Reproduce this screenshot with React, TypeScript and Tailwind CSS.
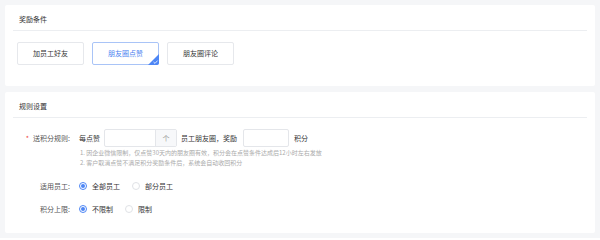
import type { FC, ReactNode } from 'react';

const font = { fontFamily: '"Noto Sans CJK SC", "Noto Sans", sans-serif' };

const SectionHeader: FC<{ title: string }> = ({ title }) => (
  <div className="mx-[8px] h-[26px] border-b border-[#eceef1] pl-[6px] pt-[10px] text-[7px] leading-[8px] text-[#333]">
    {title}
  </div>
);

const TabButton: FC<{ label: string; active?: boolean }> = ({ label, active }) => (
  <div
    className={
      'relative flex h-[23px] w-[67px] items-center justify-center rounded-[2px] border text-[7px] ' +
      (active ? 'border-[#a9c4f7] text-[#4a7ff0]' : 'border-[#e6e8ec] text-[#333]')
    }
  >
    {label}
    {active && (
      <svg className="absolute -bottom-px -right-px" width="11" height="11" viewBox="0 0 11 11">
        <path d="M11 0 L11 9 Q11 11 9 11 L0 11 Z" fill="#4d86f5" />
        <path d="M5.5 8 L7 9.4 L9.6 6.6" stroke="#fff" strokeWidth="0.8" fill="none" />
      </svg>
    )}
  </div>
);

const Radio: FC<{ label: string; checked?: boolean }> = ({ label, checked }) => (
  <div className="flex items-center gap-[5px]">
    <span
      className={
        'flex h-[8px] w-[8px] items-center justify-center rounded-full border ' +
        (checked ? 'border-[#4d86f5]' : 'border-[#e0e2e6]')
      }
    >
      {checked && <span className="h-[4px] w-[4px] rounded-full bg-[#4d86f5]" />}
    </span>
    <span className="text-[7px] text-[#333]">{label}</span>
  </div>
);

const FormRow: FC<{ label: string; required?: boolean; children: ReactNode }> = ({
  label,
  required,
  children,
}) => (
  <div className="flex items-start">
    <div className="flex h-[18px] w-[67px] shrink-0 items-center justify-end pr-[2px] text-[7px] text-[#555]">
      {required && <span className="mr-[4px] text-[#f0483e]">*</span>}
      {label}
    </div>
    <div className="ml-[7px] flex-1">{children}</div>
  </div>
);

export default function App() {
  return (
    <div className="flex h-[238px] w-[600px] flex-col gap-[6px] bg-[#f5f6f8] p-[5px]" style={font}>
      {/* 奖励条件 */}
      <div className="h-[81px] rounded-[2px] bg-white">
        <SectionHeader title="奖励条件" />
        <div className="mt-[11px] flex gap-[8px] px-[12px]">
          <TabButton label="加员工好友" />
          <TabButton label="朋友圈点赞" active />
          <TabButton label="朋友圈评论" />
        </div>
      </div>

      {/* 规则设置 */}
      <div className="h-[141px] rounded-[2px] bg-white">
        <SectionHeader title="规则设置" />
        <div className="mt-[11px] flex flex-col">
          <FormRow label="送积分规则:" required>
            <div className="flex h-[18px] items-center text-[7px] text-[#333]">
              <span>每点赞</span>
              <div className="ml-[4px] flex h-[18px] rounded-[2px] border border-[#e4e6ea]">
                <div className="w-[50px]" />
                <div className="flex w-[21px] items-center justify-center border-l border-[#e4e6ea] bg-[#f7f8fa] text-[#999]">
                  个
                </div>
              </div>
              <span className="ml-[4px]">员工朋友圈，奖励</span>
              <div className="ml-[6px] h-[18px] w-[46px] rounded-[2px] border border-[#e4e6ea]" />
              <span className="ml-[5px]">积分</span>
            </div>
            <div className="mt-[1px] pl-[1px] text-[6px] leading-[10px] text-[#aaa]">
              <div>1. 因企业微信限制，仅点赞30天内的朋友圈有效，积分会在点赞条件达成后12小时左右发放</div>
              <div>2. 客户取消点赞不满足积分奖励条件后，系统会自动收回积分</div>
            </div>
          </FormRow>
          <div className="mt-[9px]">
            <FormRow label="适用员工:">
              <div className="flex h-[18px] items-center gap-[12px]">
                <Radio label="全部员工" checked />
                <Radio label="部分员工" />
              </div>
            </FormRow>
          </div>
          <div className="mt-[5px]">
            <FormRow label="积分上限:">
              <div className="flex h-[18px] items-center gap-[12px]">
                <Radio label="不限制" checked />
                <Radio label="限制" />
              </div>
            </FormRow>
          </div>
        </div>
      </div>
    </div>
  );
}
